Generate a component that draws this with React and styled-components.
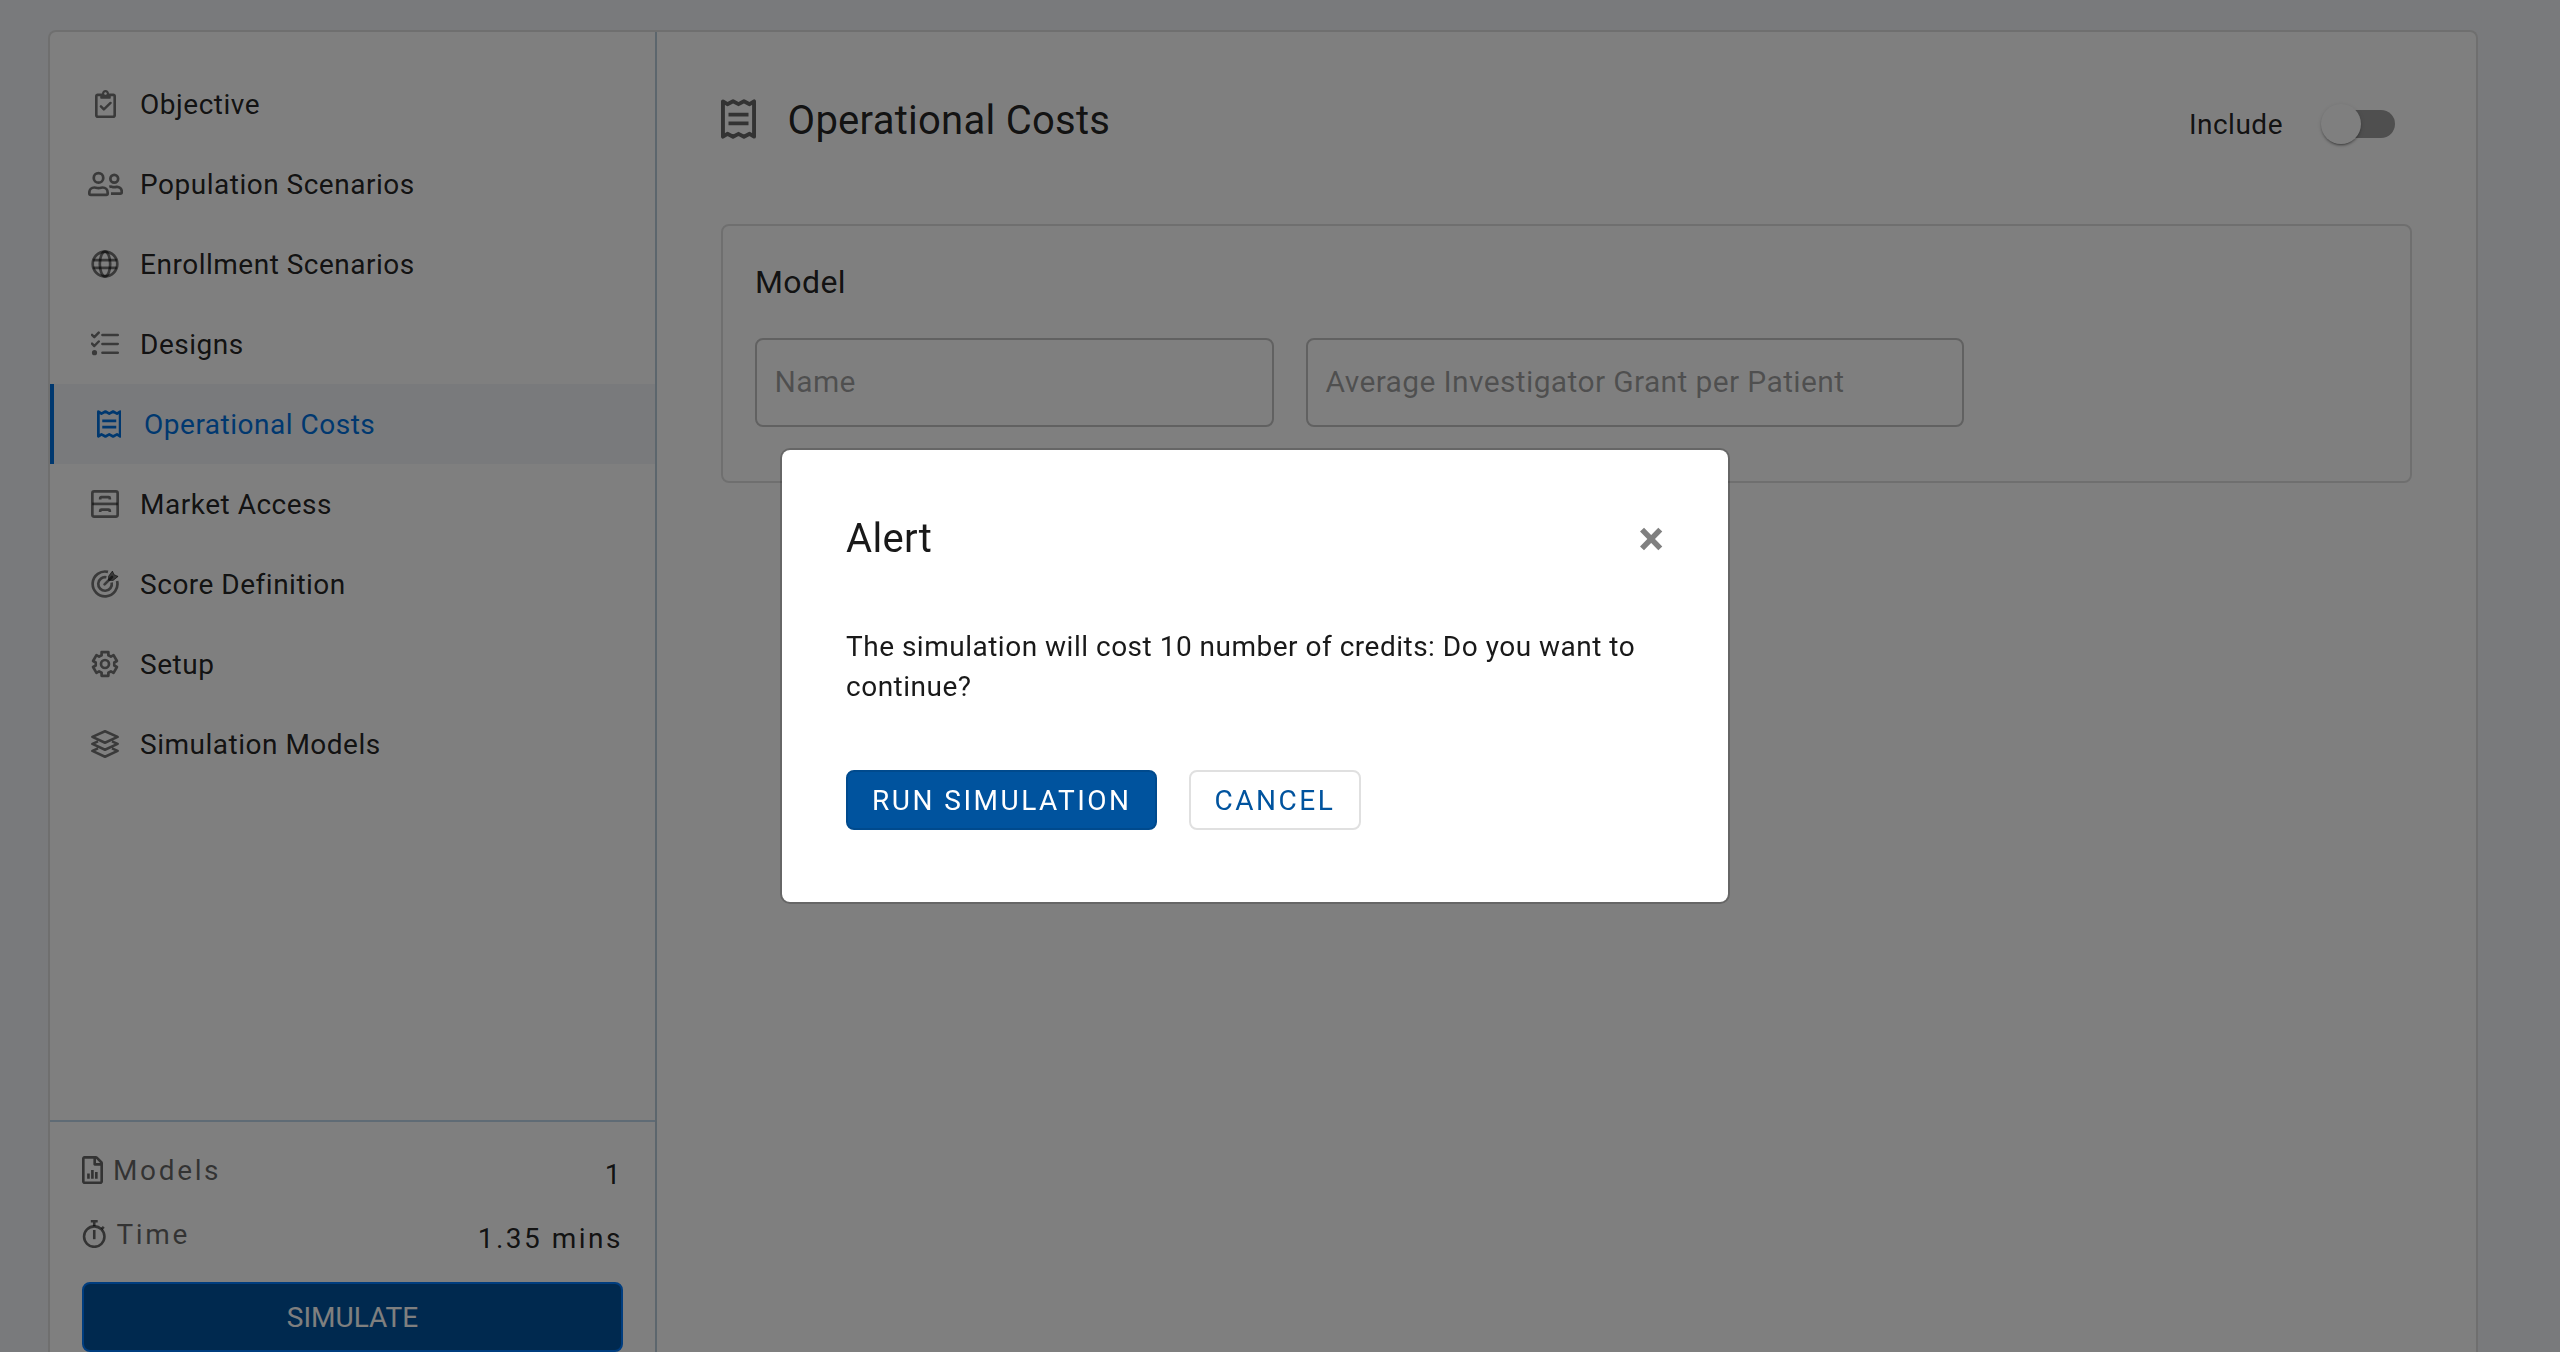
import React from "react";
import styled, { createGlobalStyle } from "styled-components";

const GlobalStyle = createGlobalStyle`
  *, *::before, *::after { box-sizing: border-box; }
  html, body { margin: 0; padding: 0; overflow: hidden; }
  body {
    background: #f2f5f9;
    color: #212121;
    font-family: Roboto, "Liberation Sans", sans-serif;
    font-size: 28px;
    line-height: 40px;
    letter-spacing: 0.0178571429em;
  }
`;

/* ---------- icons ---------- */

const Glyph = styled.svg`
  display: block;
  flex: none;
  width: ${(p) => p.$w}px;
  height: ${(p) => p.$h || 28}px;
  fill: ${(p) => (p.$solid ? "currentColor" : "none")};
  stroke: ${(p) => (p.$solid ? "none" : "currentColor")};
  stroke-width: ${(p) => p.$stroke || 2.6};
  stroke-linejoin: round;
`;

const ClipboardIcon = () => (
  <Glyph $w={21} $solid viewBox="0 0 384 512">
    <path d="M336 64h-80c0-35.3-28.7-64-64-64s-64 28.7-64 64H48C21.5 64 0 85.5 0 112v352c0 26.5 21.5 48 48 48h288c26.5 0 48-21.5 48-48V112c0-26.5-21.5-48-48-48zM192 40c13.3 0 24 10.7 24 24s-10.7 24-24 24-24-10.7-24-24 10.7-24 24-24zm144 418c0 3.3-2.7 6-6 6H54c-3.3 0-6-2.7-6-6V118c0-3.3 2.7-6 6-6h42v36c0 6.6 5.4 12 12 12h168c6.6 0 12-5.4 12-12v-36h42c3.3 0 6 2.7 6 6z" />
    <path d="M108 299l54 54 122-116" fill="none" stroke="currentColor" strokeWidth="46" strokeLinecap="round" />
  </Glyph>
);

const PeopleIcon = () => (
  <Glyph $w={35} $stroke={50} viewBox="0 0 640 512">
    <circle cx="192" cy="144" r="87" />
    <path d="M24 430v-16c0-52 40-94 92-94 20 0 40 12 76 12s56-12 76-12c52 0 92 42 92 94v16c0 15-11 26-26 26H50c-15 0-26-11-26-26z" />
    <circle cx="480" cy="160" r="71" />
    <path d="M390 308c18-6 34-6 50 0 30 10 50 10 80 0 54-8 97 36 97 84v16c0 14-10 24-24 24H420" />
  </Glyph>
);

const GlobeIcon = () => (
  <Glyph $w={28} $stroke={2.7} viewBox="0 0 28 28">
    <circle cx="14" cy="14" r="12.3" />
    <ellipse cx="14" cy="14" rx="5.2" ry="12.3" />
    <path d="M2.2 10.1h23.6M2.2 17.9h23.6" />
  </Glyph>
);

const ChecklistIcon = () => (
  <Glyph $w={28} $stroke={2.5} viewBox="0 0 28 28">
    <path d="M11.4 5.1h15.4M11.4 13.9h15.4M11.4 22.7h15.4" strokeLinecap="round" />
    <path d="M1 4.9l2.3 2.3L7.7 2.7M1 13.7L3.3 16l4.4-4.5" strokeLinecap="round" />
    <circle cx="3.5" cy="22.7" r="2.6" fill="currentColor" stroke="none" />
  </Glyph>
);

const ReceiptIcon = ({ size = 28 }) => (
  <Glyph $w={size * 0.875} $h={size} $stroke={50} viewBox="0 0 448 512">
    <path d="M25 30l57 36 72-38 70 38 70-38 72 38 57-36v452l-57-36-72 38-70-38-70 38-72-38-57 36z" />
    <path d="M96 200h256M96 312h256" />
  </Glyph>
);

const CabinetIcon = () => (
  <Glyph $w={28} $stroke={2.7} viewBox="0 0 28 28">
    <rect x="1.35" y="1.35" width="25.3" height="25.3" rx="1.8" />
    <path d="M1.3 13.9h25.4" />
    <path d="M9.2 9.6V8.3c0-.7.4-1.1 1.1-1.1h7.4c.7 0 1.1.4 1.1 1.1v1.3M9.2 22v-1.3c0-.7.4-1.1 1.1-1.1h7.4c.7 0 1.1.4 1.1 1.1V22" />
  </Glyph>
);

const TargetIcon = () => (
  <Glyph $w={28} $stroke={2.7} viewBox="0 0 28 28">
    <path d="M17 1.9A12.4 12.4 0 1 0 26.1 11" />
    <path d="M15.4 7.3A6.8 6.8 0 1 0 20.7 12.6" />
    <path d="M13.6 14.4L21 7" strokeLinecap="round" />
    <path d="M17.6 6.2l3.8-5.1 1.8 3.7 3.9 1.6-5 4-4.5-.1z" fill="currentColor" strokeWidth="1" />
  </Glyph>
);

const gearPath = () => {
  const points = [];
  for (let k = 0; k < 6; k += 1) {
    const mid = -90 + k * 60;
    [[9.4, -21], [12.3, -16], [12.3, 16], [9.4, 21]].forEach(([radius, offset]) => {
      const a = ((mid + offset) * Math.PI) / 180;
      points.push(`${(14 + radius * Math.cos(a)).toFixed(2)} ${(14 + radius * Math.sin(a)).toFixed(2)}`);
    });
  }
  return `M${points.join("L")}Z`;
};

const GearIcon = () => (
  <Glyph $w={28} $stroke={2.7} viewBox="0 0 28 28">
    <path d={gearPath()} />
    <circle cx="14" cy="14" r="4" />
  </Glyph>
);

const LayersIcon = () => (
  <Glyph $w={28} $stroke={2.6} viewBox="0 0 28 28">
    <path d="M14 1.3L26.6 6.9 14 12.7 1.4 6.9z" />
    <path d="M7 11.4l-5.6 2.5L14 19.7l12.6-5.8-5.6-2.5M7 18.4l-5.6 2.5L14 26.7l12.6-5.8-5.6-2.5" />
  </Glyph>
);

const FileChartIcon = () => (
  <Glyph $w={21} $solid viewBox="0 0 384 512">
    <path d="M369.9 97.9L286 14C277 5 264.8-.1 252.1-.1H48C21.5 0 0 21.5 0 48v416c0 26.5 21.5 48 48 48h288c26.5 0 48-21.5 48-48V131.9c0-12.7-5.1-25-14.1-34zM332.1 128H256V51.9l76.1 76.1zM48 464V48h160v104c0 13.3 10.7 24 24 24h104v288H48z" />
    <path d="M94 320h48v96H94zM166 256h48v160h-48zM238 292h48v124h-48z" />
  </Glyph>
);

const StopwatchIcon = () => (
  <Glyph $w={24.5} $stroke={2.6} viewBox="0 0 24.5 28">
    <circle cx="12.25" cy="16.6" r="10.2" />
    <path d="M8.8 1.3h6.9M12.25 1.3v5M19.6 9l2.2-2.2" />
    <path d="M12.25 10v9.2" />
  </Glyph>
);

/* ---------- page shell ---------- */

const Page = styled.div`
  width: 2560px;
  height: 1352px;
  padding: 30px 82px 0 48px;
  overflow: hidden;
`;

const Card = styled.div`
  display: flex;
  height: 100%;
  background: #fff;
  border: 2px solid #dfdfdf;
  border-bottom: 0;
  border-radius: 8px 8px 0 0;
`;

const Sidebar = styled.aside`
  display: flex;
  flex-direction: column;
  width: 607px;
  border-right: 2px solid #b9ccdb;
`;

const Nav = styled.nav`
  flex: 1;
  padding-top: 32px;
`;

const NavItem = styled.a`
  display: flex;
  align-items: center;
  height: 80px;
  padding-left: 37.5px;
  color: ${(p) => (p.$active ? "#0071df" : "rgba(0, 0, 0, 0.87)")};
  background: ${(p) => (p.$active ? "#f2f5f9" : "transparent")};
  border-left: ${(p) => (p.$active ? "4px solid #0071df" : "0")};
`;

const NavIcon = styled.span`
  display: flex;
  justify-content: center;
  width: 35px;
  margin-right: 17.6px;
  color: ${(p) => (p.$active ? "inherit" : "rgba(0, 0, 0, 0.54)")};
`;

const NavLabel = styled.span`
  padding-top: 2px;
`;

const Summary = styled.div`
  height: 232px;
  padding: 16px 32px 0;
  border-top: 2px solid #bfd6ea;
`;

const SummaryRow = styled.div`
  display: flex;
  align-items: center;
  justify-content: space-between;
  height: 64px;
`;

const SummaryLabel = styled.div`
  display: flex;
  align-items: center;
  gap: 10px;
  color: rgba(0, 0, 0, 0.6);
  letter-spacing: 2.65px;
`;

const SummaryName = styled.span`
  padding-top: 2px;
`;

const SummaryValue = styled.div`
  padding-top: 10px;
  color: rgba(0, 0, 0, 0.87);
  letter-spacing: 2.5px;
`;

const SimulateButton = styled.button`
  display: block;
  width: 100%;
  height: 70px;
  margin-top: 16px;
  padding: 2px 0 0;
  font: inherit;
  letter-spacing: 0;
  color: #fff;
  background: #00539e;
  border: 2px solid #007bff;
  border-radius: 8px;
`;

/* ---------- main content ---------- */

const Main = styled.main`
  flex: 1;
  padding: 64px 64px 0;
  color: rgba(0, 0, 0, 0.87);
`;

const Header = styled.header`
  display: flex;
  align-items: flex-start;
  height: 56px;
  margin-bottom: 72px;
`;

const HeaderIcon = styled.span`
  padding-top: 3px;
  margin-right: 31.6px;
  color: rgba(0, 0, 0, 0.6);
`;

const Title = styled.h1`
  flex: 1;
  margin: 0;
  padding-top: 1px;
  font-size: 40px;
  font-weight: 400;
  line-height: 48px;
  letter-spacing: 0.27px;
`;

const IncludeControl = styled.div`
  display: flex;
  align-items: center;
  height: 56px;
  padding-right: 17px;
`;

const IncludeLabel = styled.span`
  padding-top: 2px;
`;

const Track = styled.span`
  display: flex;
  align-items: center;
  width: 64px;
  height: 28px;
  margin-left: 48px;
  background: #9e9e9e;
  border-radius: 14px;
`;

const Thumb = styled.span`
  flex: none;
  width: 40px;
  height: 40px;
  margin-left: -10px;
  background: #fff;
  border-radius: 50%;
  box-shadow: 0 3px 1px -2px rgba(0, 0, 0, 0.2), 0 2px 2px rgba(0, 0, 0, 0.2), 0 1px 5px rgba(0, 0, 0, 0.12);
`;

const Panel = styled.section`
  height: 259px;
  padding: 32px 32px 0;
  border: 2px solid #dfdfdf;
  border-radius: 8px;
`;

const PanelTitle = styled.h2`
  margin: 0 0 32px;
  font-size: 32px;
  font-weight: 400;
  line-height: 48px;
  letter-spacing: 0.4px;
`;

const Fields = styled.div`
  display: flex;
  gap: 32px;
`;

const Field = styled.div`
  display: flex;
  align-items: center;
  width: ${(p) => p.$width}px;
  height: 89px;
  padding: 0 0 2px 17.5px;
  font-size: 30px;
  letter-spacing: 0.36px;
  color: rgba(0, 0, 0, 0.38);
  border: 2px solid #c2c2c2;
  border-radius: 8px;
`;

/* ---------- dialog ---------- */

const Backdrop = styled.div`
  position: fixed;
  inset: 0;
  padding: 448px 0 0 780px;
  background: rgba(0, 0, 0, 0.5);
`;

const Dialog = styled.div`
  width: 950px;
  height: 456px;
  padding: 65px 64px 64px;
  color: rgba(0, 0, 0, 0.9);
  background: #fff;
  background-clip: padding-box;
  border: 2px solid rgba(0, 0, 0, 0.2);
  border-radius: 10px;
`;

const DialogHeader = styled.div`
  display: flex;
  align-items: center;
  justify-content: space-between;
  height: 48px;
  margin-bottom: 64px;
`;

const DialogTitle = styled.h3`
  margin: 0;
  font-size: 40px;
  font-weight: 400;
  line-height: 48px;
  letter-spacing: 0.3px;
`;

const Close = styled.button`
  padding: 0;
  font: 700 48px/48px Roboto, "Liberation Sans", sans-serif;
  color: #808080;
  background: none;
  border: 0;
`;

const Message = styled.p`
  width: 818px;
  margin: 0 0 63px;
`;

const Actions = styled.div`
  display: flex;
  gap: 32px;
`;

const ActionButton = styled.button`
  height: 60px;
  padding: 2px ${(p) => (p.$primary ? 23 : 24)}px 0 24px;
  font: inherit;
  letter-spacing: 0.0892857143em;
  color: ${(p) => (p.$primary ? "#fff" : "#00539e")};
  background: ${(p) => (p.$primary ? "#00539e" : "#fff")};
  border: 2px solid ${(p) => (p.$primary ? "#004a8d" : "#e0e0e0")};
  border-radius: 8px;
`;

const NAV_ITEMS = [
  { label: "Objective", icon: ClipboardIcon },
  { label: "Population Scenarios", icon: PeopleIcon },
  { label: "Enrollment Scenarios", icon: GlobeIcon },
  { label: "Designs", icon: ChecklistIcon },
  { label: "Operational Costs", icon: ReceiptIcon, active: true },
  { label: "Market Access", icon: CabinetIcon },
  { label: "Score Definition", icon: TargetIcon },
  { label: "Setup", icon: GearIcon },
  { label: "Simulation Models", icon: LayersIcon },
];

export default function App() {
  return (
    <>
      <GlobalStyle />
      <Page>
        <Card>
          <Sidebar>
            <Nav>
              {NAV_ITEMS.map(({ label, icon: Icon, active }) => (
                <NavItem key={label} $active={active}>
                  <NavIcon $active={active}>
                    <Icon />
                  </NavIcon>
                  <NavLabel>{label}</NavLabel>
                </NavItem>
              ))}
            </Nav>
            <Summary>
              <SummaryRow>
                <SummaryLabel>
                  <FileChartIcon />
                  <SummaryName>Models</SummaryName>
                </SummaryLabel>
                <SummaryValue>1</SummaryValue>
              </SummaryRow>
              <SummaryRow>
                <SummaryLabel>
                  <StopwatchIcon />
                  <SummaryName>Time</SummaryName>
                </SummaryLabel>
                <SummaryValue>1.35 mins</SummaryValue>
              </SummaryRow>
              <SimulateButton>SIMULATE</SimulateButton>
            </Summary>
          </Sidebar>
          <Main>
            <Header>
              <HeaderIcon>
                <ReceiptIcon size={40} />
              </HeaderIcon>
              <Title>Operational Costs</Title>
              <IncludeControl>
                <IncludeLabel>Include</IncludeLabel>
                <Track>
                  <Thumb />
                </Track>
              </IncludeControl>
            </Header>
            <Panel>
              <PanelTitle>Model</PanelTitle>
              <Fields>
                <Field $width={519}>Name</Field>
                <Field $width={658}>Average Investigator Grant per Patient</Field>
              </Fields>
            </Panel>
          </Main>
        </Card>
      </Page>
      <Backdrop>
        <Dialog role="dialog">
          <DialogHeader>
            <DialogTitle>Alert</DialogTitle>
            <Close>×</Close>
          </DialogHeader>
          <Message>The simulation will cost 10 number of credits: Do you want to continue?</Message>
          <Actions>
            <ActionButton $primary>RUN SIMULATION</ActionButton>
            <ActionButton>CANCEL</ActionButton>
          </Actions>
        </Dialog>
      </Backdrop>
    </>
  );
}
